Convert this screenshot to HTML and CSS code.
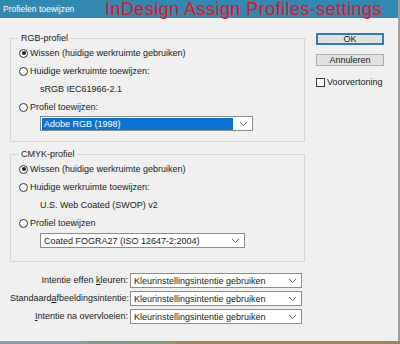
FILE: index.html
```html
<!DOCTYPE html>
<html lang="nl">

<head>
    <meta charset="UTF-8">
    <meta name="viewport" content="width=device-width, initial-scale=1.0">
    <title>Profielen toewijzen</title>
    <link rel="stylesheet" href="styles.css">
</head>

<body>
    <div class="window">
        <div class="titlebar">
            <span class="title">Profielen toewijzen</span>
            <span class="note">InDesign Assign Profiles-settings</span>
        </div>
        <div class="content">
            <div class="main">
                <fieldset class="group">
                    <legend>RGB-profiel</legend>
                    <div class="opt"><span class="radio on"></span>Wissen (huidige werkruimte gebruiken)</div>
                    <div class="opt"><span class="radio"></span>Huidige werkruimte toewijzen:</div>
                    <div class="sub">sRGB IEC61966-2.1</div>
                    <div class="opt"><span class="radio"></span>Profiel toewijzen:</div>
                    <div class="select rgb-select focused">
                        <span class="value">Adobe RGB (1998)</span>
                        <svg class="arrow" width="9" height="6" viewBox="0 0 9 6"><polyline points="1,1 4.5,4.5 8,1" fill="none" stroke="#606060" stroke-width="1"/></svg>
                    </div>
                </fieldset>

                <fieldset class="group cmyk">
                    <legend>CMYK-profiel</legend>
                    <div class="opt"><span class="radio on"></span>Wissen (huidige werkruimte gebruiken)</div>
                    <div class="opt"><span class="radio"></span>Huidige werkruimte toewijzen:</div>
                    <div class="sub">U.S. Web Coated (SWOP) v2</div>
                    <div class="opt"><span class="radio"></span>Profiel toewijzen</div>
                    <div class="select cmyk-select">
                        <span class="value">Coated FOGRA27 (ISO 12647-2:2004)</span>
                        <svg class="arrow" width="9" height="6" viewBox="0 0 9 6"><polyline points="1,1 4.5,4.5 8,1" fill="none" stroke="#606060" stroke-width="1"/></svg>
                    </div>
                </fieldset>

                <div class="intents">
                    <label>Intentie effen <u>k</u>leuren:</label>
                    <div class="select">
                        <span class="value">Kleurinstellingsintentie gebruiken</span>
                        <svg class="arrow" width="9" height="6" viewBox="0 0 9 6"><polyline points="1,1 4.5,4.5 8,1" fill="none" stroke="#606060" stroke-width="1"/></svg>
                    </div>
                    <label>Standaard<u>a</u>fbeeldingsintentie:</label>
                    <div class="select">
                        <span class="value">Kleurinstellingsintentie gebruiken</span>
                        <svg class="arrow" width="9" height="6" viewBox="0 0 9 6"><polyline points="1,1 4.5,4.5 8,1" fill="none" stroke="#606060" stroke-width="1"/></svg>
                    </div>
                    <label><u>I</u>ntentie na overvloeien:</label>
                    <div class="select">
                        <span class="value">Kleurinstellingsintentie gebruiken</span>
                        <svg class="arrow" width="9" height="6" viewBox="0 0 9 6"><polyline points="1,1 4.5,4.5 8,1" fill="none" stroke="#606060" stroke-width="1"/></svg>
                    </div>
                </div>
            </div>

            <div class="side">
                <div class="btn default">OK</div>
                <div class="btn">Annuleren</div>
                <div class="check"><span class="box"></span>Voorvertoning</div>
            </div>
        </div>
    </div>
    <div class="desktop"></div>
</body>

</html>
```

FILE: styles.css
```css
html,
body {
    margin: 0;
    padding: 0;
}

body {
    width: 400px;
    height: 344px;
    overflow: hidden;
    font-family: "Liberation Sans", Arial, sans-serif;
    font-size: 9px;
    color: #1a1a1a;
    background: #8d9daa;
}

.window {
    position: relative;
    width: 398px;
    height: 341px;
    background: #f0f0f0;
    border-right: 1px solid #9aa4aa;
}

.titlebar {
    height: 18px;
    background: #3188b0;
    display: flex;
    align-items: center;
}

.title {
    color: #ffffff;
    font-size: 8.5px;
    padding-left: 3px;
}

.note {
    position: absolute;
    left: 105px;
    top: 0;
    font-size: 18px;
    line-height: 19px;
    letter-spacing: 0.45px;
    color: #e3141c;
    white-space: nowrap;
}

.content {
    display: flex;
}

.main {
    width: 295px;
    padding-left: 10px;
}

.group {
    margin: 14px 0 0;
    padding: 0 0 10px 8px;
    border: 1px solid #d6d6d6;
    min-width: 0;
}

.group legend {
    padding: 0 2px;
    line-height: 12px;
}

.group.cmyk {
    margin-top: 6px;
    padding-bottom: 13px;
}

.opt {
    height: 18px;
    display: flex;
    align-items: center;
    gap: 2px;
}

.radio {
    width: 7px;
    height: 7px;
    border: 1px solid #333333;
    border-radius: 50%;
    background: #ffffff;
    display: flex;
    align-items: center;
    justify-content: center;
}

.radio.on::after {
    content: "";
    width: 4px;
    height: 4px;
    border-radius: 50%;
    background: #222222;
}

.sub {
    height: 18px;
    line-height: 18px;
    padding-left: 21px;
}

.select {
    height: 13px;
    border: 1px solid #8c8c8c;
    background: #ffffff;
    display: flex;
    align-items: center;
    padding: 0 4px 0 1px;
}

.select .value {
    flex: 1;
    padding-left: 2px;
    white-space: nowrap;
    overflow: hidden;
}

.rgb-select {
    width: 206px;
    margin-left: 21px;
}

.focused .value {
    background: #0a74d4;
    color: #ffffff;
    height: 12px;
    line-height: 12px;
    margin-right: 6px;
}

.cmyk-select {
    width: 198px;
    margin: 1px 0 0 21px;
}

.intents {
    margin-top: 11px;
    display: grid;
    grid-template-columns: 118px 172px;
    grid-auto-rows: 15px;
    column-gap: 2px;
    row-gap: 3px;
}

.intents label {
    text-align: right;
    line-height: 15px;
    white-space: nowrap;
}

.side {
    margin-left: 11px;
    padding-top: 15px;
    display: flex;
    flex-direction: column;
    gap: 9px;
}

.btn {
    width: 66px;
    height: 10px;
    line-height: 10px;
    border: 1px solid #adadad;
    background: #e1e1e1;
    text-align: center;
}

.btn.default {
    border-color: #2f7cb8;
    box-shadow: inset 0 0 0 1px #2f7cb8;
}

.check {
    margin-top: 1px;
    display: flex;
    align-items: center;
    gap: 2px;
    height: 12px;
}

.check .box {
    width: 7px;
    height: 7px;
    border: 1px solid #333a48;
    background: #ffffff;
}

.desktop {
    height: 3px;
    background: linear-gradient(to right, #8d9daa 0, #8d9daa 85px, #7e9a90 90px, #8a9a78 170px, #9b8852 180px, #9a8650 100%);
}
```
